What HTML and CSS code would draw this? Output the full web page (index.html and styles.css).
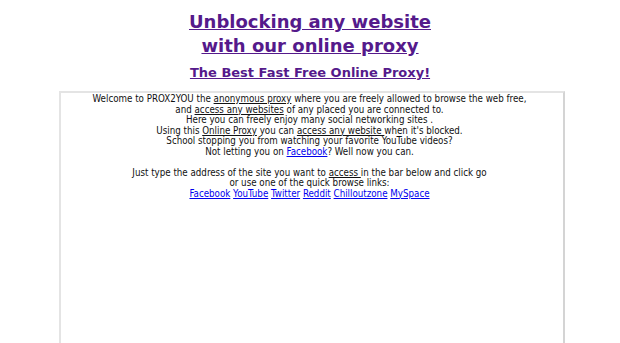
FILE: index.html
```html
<!DOCTYPE html>
<html lang="en">
<head>
    <meta charset="UTF-8">
    <title>PROX2YOU - Unblocking any website with our online proxy</title>
    <link rel="stylesheet" href="styles.css">
</head>
<body>

    <div class="header">
        <h1><a href="#">Unblocking any website <br>with our online proxy</a></h1>
        <h2><a href="#">The Best Fast Free Online Proxy!</a></h2>
    </div>

    <div class="content">
        <p>
            Welcome to PROX2YOU the <u>anonymous proxy</u> where you are freely allowed to browse the web free,<br>
            and <u>access any websites</u> of any placed you are connected to.<br>
            Here you can freely enjoy many social networking sites .<br>
            Using this <u>Online Proxy</u> you can <u>access any website </u>when it's blocked.<br>
            School stopping you from watching your favorite YouTube videos?<br>
            Not letting you on <a href="#">Facebook</a>? Well now you can.
        </p>
        <p>
            Just type the address of the site you want to <u>access </u>in the bar below and click go<br>
            or use one of the quick browse links:<br>
            <a href="#">Facebook</a> <a href="#">YouTube</a> <a href="#">Twitter</a> <a href="#">Reddit</a> <a href="#">Chilloutzone</a> <a href="#">MySpace</a>
        </p>
    </div>

</body>
</html>
```
FILE: styles.css
```css
/* 基本 */
body {
    margin: 0;
    padding: 0;
    background: #ffffff;
    font-family: "DejaVu Sans", Verdana, sans-serif;
}

.header {
    text-align: center;
    padding-top: 10px;
}

.header a {
    color: #551a8b;
}

h1 {
    margin: 0;
    font-size: 18px;
    line-height: 24px;
    font-weight: bold;
}

h2 {
    margin: 7px 0 0 0;
    font-size: 13px;
    line-height: 16px;
    font-weight: bold;
}

/* 本文ボックス */
.content {
    width: 497px;
    height: 400px;
    margin: 10px 0 0 59px;
    padding: 1px 5px 0 0;
    border: 2px solid #e4e4e4;
    border-right-color: #d4d4d4;
    text-align: center;
    font-family: "DejaVu Sans Condensed", Tahoma, sans-serif;
    font-size: 9.7px;
    line-height: 10.5px;
    color: #111;
}

.content p {
    margin: 0 0 10.5px 0;
}

.content u {
    text-decoration: underline;
}

.content a {
    color: #0000ee;
}
```
